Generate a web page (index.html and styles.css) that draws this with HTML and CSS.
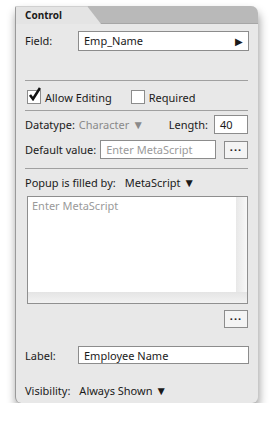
FILE: index.html
```html
<!DOCTYPE html>
<html lang="en">
<head>
    <meta charset="UTF-8">
    <title>Control</title>
    <link rel="stylesheet" href="styles.css">
</head>
<body>

<div class="panel">
    <!-- Cabeçalho com aba -->
    <div class="header">
        <div class="tab">Control</div>
    </div>

    <div class="content">
        <div class="row row-field">
            <span class="lbl lbl-field">Field:</span>
            <div class="input input-field">Emp_Name <span class="arrow">&#9654;</span></div>
        </div>

        <hr class="sep sep-1">

        <div class="row row-check">
            <span class="check checked"><svg width="13" height="14" viewBox="0 0 13 14"><path d="M2 8 L5 12 L12 1" fill="none" stroke="#111" stroke-width="2.6"/></svg></span>
            <span class="lbl">Allow Editing</span>
            <span class="check check-req"></span>
            <span class="lbl">Required</span>
        </div>

        <hr class="sep">

        <div class="row row-type">
            <span class="lbl">Datatype:</span>
            <span class="gray">Character <span class="tri">&#9660;</span></span>
            <span class="spacer"></span>
            <span class="lbl">Length:</span>
            <div class="input input-len">40</div>
        </div>

        <div class="row row-default">
            <span class="lbl">Default value:</span>
            <div class="input input-def placeholder">Enter MetaScript</div>
            <div class="btn">&middot;&middot;&middot;</div>
        </div>

        <hr class="sep">

        <div class="row row-popup">
            <span class="lbl">Popup is filled by:</span>
            <span class="menu">MetaScript <span class="tri">&#9660;</span></span>
        </div>

        <div class="scroll">
            <div class="scroll-main">
                <div class="scroll-text placeholder">Enter MetaScript</div>
                <div class="vbar"></div>
            </div>
            <div class="hbar"></div>
        </div>

        <div class="row row-btn">
            <div class="btn">&middot;&middot;&middot;</div>
        </div>

        <div class="row row-label">
            <span class="lbl lbl-field">Label:</span>
            <div class="input input-field">Employee Name</div>
        </div>

        <div class="row row-vis">
            <span class="lbl">Visibility:</span>
            <span class="menu">Always Shown <span class="tri">&#9660;</span></span>
        </div>
    </div>
</div>

</body>
</html>
```

FILE: styles.css
```css
body {
    margin: 0;
    background-color: #ffffff;
    font-family: 'Noto Sans', sans-serif;
    font-size: 11px;
    color: #1a1a1a;
}

.panel {
    width: 242px;
    height: 397px;
    margin: 6px 0 0 15px;
    background-color: #e8e8e8;
    border-left: 1px solid #9a9a9a;
    border-radius: 2px 7px 6px 6px;
    box-shadow: 1px 6px 10px rgba(0, 0, 0, 0.4);
    display: flex;
    flex-direction: column;
    overflow: hidden;
}

/* Cabeçalho */
.header {
    height: 17px;
    background-color: #b9b9b9;
    border-bottom: 1px solid #a6a6a6;
    display: flex;
}

.tab {
    width: 85px;
    height: 18px;
    background-color: #e4e4e4;
    clip-path: polygon(0 0, 71px 0, 100% 100%, 0 100%);
    font-weight: bold;
    font-size: 10px;
    line-height: 16px;
    padding-left: 9px;
    box-sizing: border-box;
    border-top: 1px solid #d0d0d0;
}

.content {
    padding: 0 9px 0 9px;
    display: flex;
    flex-direction: column;
}

.row {
    display: flex;
    align-items: center;
}

.lbl {
    white-space: nowrap;
}

.lbl-field {
    width: 53px;
}

.input {
    background-color: #ffffff;
    border: 1px solid #8c8c8c;
    box-sizing: border-box;
    padding: 0 5px;
    display: flex;
    align-items: center;
    white-space: nowrap;
    overflow: hidden;
}

.placeholder {
    color: #9a9a9a;
}

.row-field {
    margin-top: 6px;
    height: 21px;
}

.input-field {
    flex: 1;
    height: 20px;
}

.arrow {
    margin-left: auto;
    font-size: 10px;
}

.tri {
    font-size: 12px;
    line-height: 11px;
}

.sep {
    border: none;
    border-top: 1px solid #a0a0a0;
    margin: 0;
    width: 223px;
}

.sep-1 {
    margin-top: 29px;
}

.row-check {
    height: 29px;
    padding-top: 3px;
    box-sizing: border-box;
}

.check {
    width: 12px;
    height: 12px;
    border: 1px solid #8c8c8c;
    background-color: #ffffff;
    margin-left: 2px;
    margin-right: 4px;
    position: relative;
}

.check svg {
    position: absolute;
    left: 0;
    top: -4px;
}

.check-req {
    margin-left: 19px;
}

.row-type {
    margin-top: 3px;
    height: 20px;
    padding-right: 1px;
}

.gray {
    color: #8a8a8a;
    margin-left: 4px;
    white-space: nowrap;
}

.spacer {
    flex: 1;
}

.input-len {
    width: 34px;
    height: 19px;
    margin-left: 6px;
}

.row-default {
    margin-top: 6px;
    height: 19px;
    margin-bottom: 9px;
}

.input-def {
    width: 116px;
    height: 19px;
    margin-left: 4px;
}

.btn {
    width: 24px;
    height: 18px;
    border: 1px solid #8c8c8c;
    box-sizing: border-box;
    background-color: #f4f4f4;
    margin-left: auto;
    margin-right: 1px;
    text-align: center;
    line-height: 16px;
    font-weight: bold;
    letter-spacing: 1px;
}

.row-popup {
    height: 27px;
}

.menu {
    margin-left: 9px;
    white-space: nowrap;
}

.scroll {
    width: 221px;
    height: 108px;
    margin-left: 2px;
    border: 1px solid #909090;
    box-sizing: border-box;
    display: flex;
    flex-direction: column;
    background-color: #ececec;
}

.scroll-main {
    flex: 1;
    display: flex;
}

.scroll-text {
    flex: 1;
    background-color: #ffffff;
    padding: 1px 4px;
    box-shadow: 1px 1px 2px rgba(0, 0, 0, 0.2);
}

.vbar {
    width: 11px;
    background: linear-gradient(to right, #e8e8e8, #f8f8f8);
}

.hbar {
    height: 11px;
    background: linear-gradient(to bottom, #e4e4e4, #f2f2f2);
}

.row-btn {
    margin-top: 6px;
    height: 18px;
}

.row-label {
    margin-top: 18px;
    height: 18px;
}

.row-label .input-field {
    height: 18px;
}

.row-vis {
    margin-top: 16px;
    height: 20px;
}
```
